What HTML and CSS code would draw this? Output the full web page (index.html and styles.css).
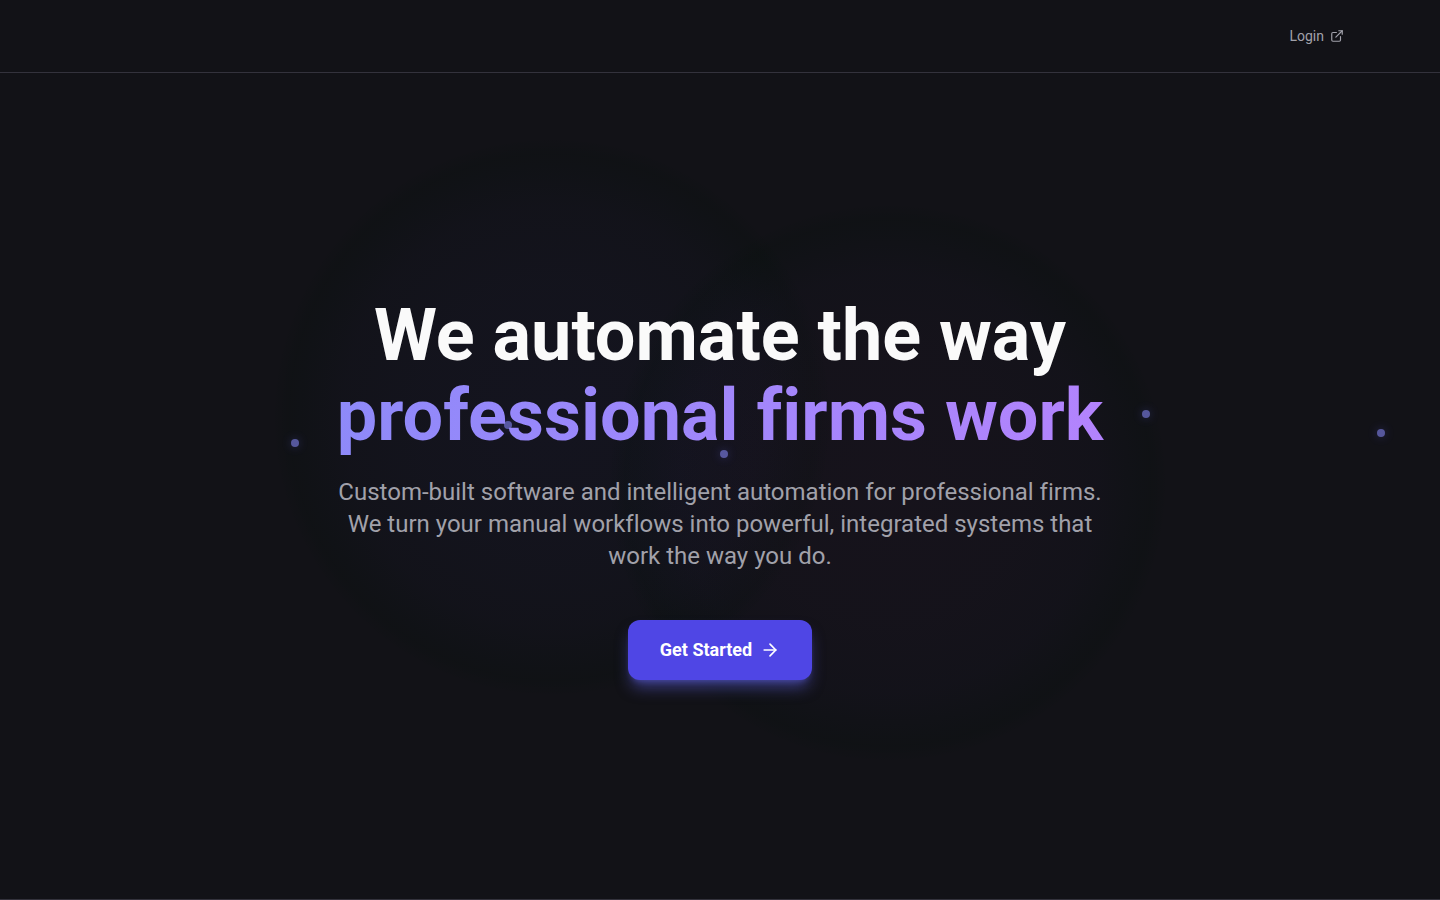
FILE: index.html
```html
<!DOCTYPE html>
<html lang="en">
<head>
<meta charset="utf-8">
<meta name="viewport" content="width=device-width, initial-scale=1">
<title>We automate the way professional firms work</title>
<link rel="stylesheet" href="styles.css">
</head>
<body>

<div class="backdrop" aria-hidden="true">
    <div class="glow glow-indigo"></div>
    <div class="glow glow-purple"></div>
    <span class="dot dot-1"></span>
    <span class="dot dot-2"></span>
    <span class="dot dot-3"></span>
    <span class="dot dot-4"></span>
    <span class="dot dot-5"></span>
</div>

<header class="site-header">
    <nav class="nav">
        <a class="login" href="#login">
            Login
            <svg class="login-icon" viewBox="0 0 24 24" aria-hidden="true">
                <path d="M15 3h6v6"/>
                <path d="M10 14 21 3"/>
                <path d="M18 13v6a2 2 0 0 1-2 2H5a2 2 0 0 1-2-2V8a2 2 0 0 1 2-2h6"/>
            </svg>
        </a>
    </nav>
</header>

<main class="hero">
    <h1 class="title">We automate the way <span class="accent">professional firms work</span></h1>
    <p class="lead">Custom-built software and intelligent automation for professional firms. We turn your manual workflows into powerful, integrated systems that work the way you do.</p>
    <button class="cta" type="button">
        Get Started
        <svg class="cta-icon" viewBox="0 0 24 24" aria-hidden="true">
            <path d="M5 12h14"/>
            <path d="m12 5 7 7-7 7"/>
        </svg>
    </button>
</main>

</body>
</html>
```
FILE: styles.css
```css
* {
    box-sizing: border-box;
}

body {
    position: relative;
    display: flex;
    flex-direction: column;
    min-height: 100vh;
    margin: 0;
    background: #121217;
    color: #fafafa;
    font-family: Roboto, "Liberation Sans", sans-serif;
    font-variant-ligatures: none;
}

/* glows and floating dots behind the page */
.backdrop {
    position: absolute;
    inset: 0;
    overflow: hidden;
}

.glow {
    position: absolute;
    width: 560px;
    height: 560px;
    border-radius: 50%;
}

.glow-indigo {
    top: calc(25% - 88px);
    left: calc(25% - 88px);
    background: radial-gradient(closest-side, rgba(70, 70, 229, 0.04), rgba(60, 66, 200, 0.03) 50%, rgba(30, 40, 120, 0.03) 75%, rgba(0, 16, 8, 0.14) 94%, rgba(0, 16, 8, 0));
}

.glow-purple {
    right: calc(25% - 88px);
    bottom: calc(25% - 88px);
    background: radial-gradient(closest-side, rgba(130, 40, 140, 0.04), rgba(110, 40, 140, 0.03) 50%, rgba(50, 30, 110, 0.03) 75%, rgba(0, 16, 8, 0.14) 94%, rgba(0, 16, 8, 0));
}

.dot {
    position: absolute;
    width: 8px;
    height: 8px;
    border-radius: 50%;
    background: #8486f5;
    box-shadow: 0 0 10px rgba(99, 102, 241, 0.5);
    opacity: 0.6;
}

.dot-1 { left: 291px; top: 439px; }
.dot-2 { left: 504px; top: 421px; }
.dot-3 { left: 720px; top: 450px; }
.dot-4 { left: 1142px; top: 410px; }
.dot-5 { left: 1377px; top: 429px; }

.site-header {
    position: relative;
    border-bottom: 1px solid #33323c;
}

.nav {
    display: flex;
    align-items: center;
    justify-content: flex-end;
    max-width: 1280px;
    height: 72px;
    margin: 0 auto;
    padding: 0 16px;
}

.login {
    display: flex;
    align-items: center;
    gap: 6px;
    color: #a1a1aa;
    font-size: 14px;
    line-height: 20px;
    text-decoration: none;
}

.login-icon,
.cta-icon {
    fill: none;
    stroke: currentColor;
    stroke-width: 2;
    stroke-linecap: round;
    stroke-linejoin: round;
}

.login-icon {
    width: 14px;
    height: 14px;
}

.hero {
    position: relative;
    display: flex;
    flex: 1;
    flex-direction: column;
    align-items: center;
    justify-content: center;
    padding: 4px 24px 0;
    border-bottom: 1px solid #33323c;
    text-align: center;
}

.title {
    width: 100%;
    max-width: 896px;
    margin: 0 0 20px;
    font-size: 72px;
    font-weight: 700;
    line-height: 80px;
}

.accent {
    display: block;
    background: linear-gradient(to right, #8b8af9, #b683fd);
    -webkit-background-clip: text;
    background-clip: text;
    color: transparent;
}

.lead {
    max-width: 768px;
    margin: 0 0 48px;
    color: #a1a1aa;
    font-size: 24px;
    line-height: 32px;
}

.cta {
    display: flex;
    align-items: center;
    gap: 8px;
    height: 60px;
    padding: 0 32px;
    border: 0;
    border-radius: 12px;
    background: #4f46e5;
    box-shadow: 0 10px 15px -3px rgba(99, 102, 241, 0.5), 0 4px 6px -4px rgba(99, 102, 241, 0.5);
    color: #fff;
    font-family: inherit;
    font-size: 18px;
    font-weight: 700;
    line-height: 28px;
    cursor: pointer;
}

.cta-icon {
    width: 20px;
    height: 20px;
}
```
